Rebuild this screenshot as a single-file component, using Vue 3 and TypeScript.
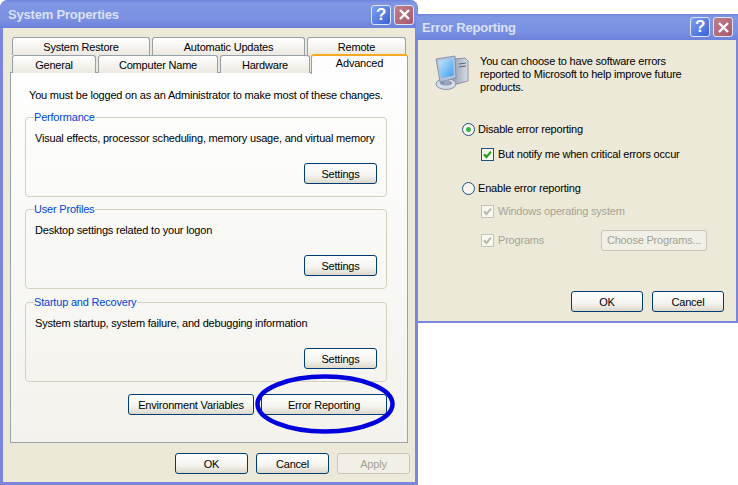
<script setup lang="ts">
const topTabs = [
  { label: 'System Restore', width: 138 },
  { label: 'Automatic Updates', width: 153 },
  { label: 'Remote', width: 99 },
]
const bottomTabs = [
  { label: 'General', width: 84 },
  { label: 'Computer Name', width: 120 },
  { label: 'Hardware', width: 90 },
]
const groups = [
  { title: 'Performance', text: 'Visual effects, processor scheduling, memory usage, and virtual memory' },
  { title: 'User Profiles', text: 'Desktop settings related to your logon' },
  { title: 'Startup and Recovery', text: 'System startup, system failure, and debugging information' },
]
</script>

<template>
  <div class="desk">
    <section class="win sys">
      <header class="title">
        <span class="title-text">System Properties</span>
        <span class="ctl help">?</span>
        <span class="ctl close">
          <svg width="13" height="13" viewBox="0 0 13 13"><path d="M2 2 L11 11 M11 2 L2 11" stroke="#fff" stroke-width="2.4" fill="none" /></svg>
        </span>
      </header>
      <div class="sys-body">
        <div class="tabs">
          <div class="tab-row">
            <div v-for="t in topTabs" :key="t.label" class="tab" :style="{ width: t.width + 'px' }">{{ t.label }}</div>
          </div>
          <div class="tab-row">
            <div v-for="t in bottomTabs" :key="t.label" class="tab" :style="{ width: t.width + 'px' }">{{ t.label }}</div>
            <div class="tab active">Advanced</div>
          </div>
        </div>
        <div class="panel">
          <p class="notice">You must be logged on as an Administrator to make most of these changes.</p>
          <fieldset v-for="g in groups" :key="g.title" class="group">
            <legend>{{ g.title }}</legend>
            <p>{{ g.text }}</p>
            <button class="btn settings">Settings</button>
          </fieldset>
          <div class="panel-actions">
            <button class="btn wide">Environment Variables</button>
            <div class="circled">
              <button class="btn wide">Error Reporting</button>
              <svg class="ring" width="146" height="64" viewBox="0 0 146 64">
                <ellipse cx="72" cy="31" rx="67.5" ry="27.5" fill="none" stroke="#0000dc" stroke-width="4.5" />
              </svg>
            </div>
          </div>
        </div>
        <div class="actions sys-actions">
          <button class="btn">OK</button>
          <button class="btn">Cancel</button>
          <button class="btn off" disabled>Apply</button>
        </div>
      </div>
    </section>

    <section class="win err">
      <header class="title small">
        <span class="title-text">Error Reporting</span>
        <span class="ctl help">?</span>
        <span class="ctl close">
          <svg width="13" height="13" viewBox="0 0 13 13"><path d="M2 2 L11 11 M11 2 L2 11" stroke="#fff" stroke-width="2.4" fill="none" /></svg>
        </span>
      </header>
      <div class="err-body">
        <div class="intro">
          <svg class="pc" width="34" height="36" viewBox="0 0 34 36">
            <defs>
              <linearGradient id="scr" x1="0" y1="0" x2="1" y2="1">
                <stop offset="0" stop-color="#c4e9fb" />
                <stop offset="1" stop-color="#3d9cec" />
              </linearGradient>
              <linearGradient id="twr" x1="0" y1="0" x2="1" y2="0">
                <stop offset="0" stop-color="#98a2b4" />
                <stop offset="1" stop-color="#d8dce4" />
              </linearGradient>
            </defs>
            <path d="M19 4 L30 3 L33 6 L33 26 L22 29 L18 27 Z" fill="url(#twr)" stroke="#7a8296" stroke-width=".8" />
            <path d="M24 9 L31 8 M24 12 L31 11" stroke="#5e6678" stroke-width="1" />
            <ellipse cx="11" cy="29" rx="10" ry="5.5" fill="#d4dae6" stroke="#76839c" stroke-width=".8" />
            <ellipse cx="11" cy="28" rx="6" ry="2.5" fill="#8793ae" />
            <path d="M1 4 L20 1 L21 23 L5 27 Z" fill="#b4c2da" stroke="#7886a4" stroke-width=".8" />
            <path d="M3.5 6 L18 3.5 L18.7 20.5 L6 23.5 Z" fill="url(#scr)" />
            <path d="M9 26 L14 25 L15 29 L9 30 Z" fill="#9aa6be" />
          </svg>
          <p>You can choose to have software errors<br />reported to Microsoft to help improve future<br />products.</p>
        </div>

        <div class="option first">
          <span class="radio"><i></i></span>
          <span>Disable error reporting</span>
        </div>
        <div class="option sub sub-first">
          <span class="check">
            <svg width="11" height="11" viewBox="0 0 11 11"><path d="M2 5.2 L4.4 8 L9 2.6" fill="none" stroke="#21a121" stroke-width="2.2" /></svg>
          </span>
          <span>But notify me when critical errors occur</span>
        </div>

        <div class="option second">
          <span class="radio"></span>
          <span>Enable error reporting</span>
        </div>
        <div class="option sub dim win-os">
          <span class="check dim-check">
            <svg width="11" height="11" viewBox="0 0 11 11"><path d="M2 5.2 L4.4 8 L9 2.6" fill="none" stroke="#bdbcae" stroke-width="2.2" /></svg>
          </span>
          <span>Windows operating system</span>
        </div>
        <div class="option sub dim prog">
          <span class="check dim-check">
            <svg width="11" height="11" viewBox="0 0 11 11"><path d="M2 5.2 L4.4 8 L9 2.6" fill="none" stroke="#bdbcae" stroke-width="2.2" /></svg>
          </span>
          <span>Programs</span>
          <button class="btn off choose" disabled>Choose Programs...</button>
        </div>

        <div class="actions err-actions">
          <button class="btn">OK</button>
          <button class="btn">Cancel</button>
        </div>
      </div>
    </section>
  </div>
</template>

<style scoped>
.desk {
  position: relative;
  width: 738px;
  height: 485px;
  overflow: hidden;
  background: #fff;
  font-family: "Liberation Sans", Arial, sans-serif;
  font-size: 11px;
  letter-spacing: -0.2px;
  color: #000;
}
.win {
  position: absolute;
  box-sizing: border-box;
  display: flex;
  flex-direction: column;
  background: #ece9d8;
  border: solid #7b87de;
  border-width: 0 3px 3px;
}
.sys {
  left: 0;
  top: 0;
  width: 418px;
  height: 485px;
  border-radius: 8px 8px 0 0;
}
.err {
  left: 416px;
  top: 14px;
  width: 322px;
  height: 309px;
  border-width: 0 2px 2px;
}
.title {
  display: flex;
  align-items: center;
  gap: 3px;
  height: 28px;
  flex: none;
  margin: 0 -3px;
  padding: 1px 4px 0 8px;
  box-sizing: border-box;
  background: linear-gradient(180deg, #6f84dc 0, #7f97e4 12%, #7a90e2 70%, #6b80d8 100%);
  border-radius: 8px 8px 0 0;
}
.title.small {
  height: 26px;
  margin: 0 -2px;
  padding: 0 5px 0 6px;
  border-radius: 0;
}
.title-text {
  flex: 1;
  font: bold 13px "Liberation Sans", sans-serif;
  letter-spacing: -0.2px;
  color: #d9e1f7;
}
.ctl {
  display: flex;
  align-items: center;
  justify-content: center;
  box-sizing: border-box;
  width: 20px;
  height: 20px;
  border: 1px solid #dfe5f8;
  border-radius: 3px;
}
.help {
  background: linear-gradient(135deg, #7ea0f0, #3a62d8);
  color: #fff;
  font: bold 17px "Liberation Sans", sans-serif;
}
.close {
  background: linear-gradient(135deg, #c0808c, #a8586c);
}
.sys-body {
  flex: 1;
  display: flex;
  flex-direction: column;
  padding: 9px 7px 0;
}
.tabs {
  position: relative;
  z-index: 1;
  margin-bottom: -1px;
}
.tab-row {
  display: flex;
  height: 18px;
  gap: 2px;
  padding-left: 2px;
}
.tab {
  box-sizing: border-box;
  height: 18px;
  text-align: center;
  line-height: 18px;
  border: 1px solid #96a0a8;
  border-bottom: 0;
  border-radius: 3px 3px 0 0;
  background: linear-gradient(180deg, #fff, #ece9e0);
}
.tab.active {
  width: 97px;
  height: 20px;
  margin: -1px 0 0 -1px;
  line-height: 15px;
  background: #fdfdfd;
  border: 0;
  border-top: 2px solid #f7a823;
  border-left: 1px solid #96a0a8;
  border-right: 1px solid #96a0a8;
}
.panel {
  box-sizing: border-box;
  width: 398px;
  height: 371px;
  padding: 15px 20px 0 15px;
  border: 1px solid #9aa2aa;
  background: linear-gradient(180deg, #fefefe, #f3f2ec);
  display: flex;
  flex-direction: column;
}
.notice {
  margin: 0 0 0 3px;
  line-height: 14px;
  white-space: nowrap;
}
.group {
  box-sizing: border-box;
  width: 362px;
  min-width: 0;
  height: 87px;
  margin: 8px 0 0 -1px;
  padding: 0 9px;
  border: 1px solid #d3d0c0;
  border-radius: 4px;
  display: flex;
  flex-direction: column;
  flex: none;
}
.group + .group {
  margin-top: 5px;
}
.group:last-of-type {
  margin-top: 6px;
}
.group legend {
  padding: 0 1px 0 0;
  margin-left: -1px;
  color: #0046d5;
  line-height: 14px;
}
.group p {
  margin: 7px 0 0;
  line-height: 14px;
  white-space: nowrap;
}
.btn {
  box-sizing: border-box;
  flex: none;
  width: 73px;
  height: 21px;
  padding: 0;
  font: inherit;
  letter-spacing: inherit;
  color: #000;
  border: 1px solid #003c74;
  border-radius: 3px;
  background: linear-gradient(180deg, #fff 0, #f4f3ee 60%, #dcd8cc 100%);
}
.btn.off {
  color: #a1a192;
  border-color: #c9c7ba;
  background: #f2f0e6;
}
.settings {
  margin: 18px 0 0 auto;
}
.panel-actions {
  display: flex;
  gap: 7px;
  margin: 12px 0 0 102px;
}
.wide {
  width: 126px;
}
.circled {
  position: relative;
}
.ring {
  position: absolute;
  left: -8px;
  top: -21px;
  pointer-events: none;
}
.actions {
  display: flex;
}
.sys-actions {
  gap: 8px;
  margin: 10px 0 0 165px;
}
.err-body {
  flex: 1;
  padding: 15px 0 0 17px;
  display: flex;
  flex-direction: column;
}
.intro {
  display: flex;
  gap: 11px;
}
.intro p {
  margin: 0;
  line-height: 13px;
  white-space: nowrap;
}
.pc {
  flex: none;
}
.option {
  display: flex;
  align-items: center;
  gap: 3px;
  height: 14px;
  white-space: nowrap;
}
.first {
  margin: 28px 0 0 27px;
}
.sub {
  margin-left: 46px;
  gap: 4px;
}
.sub-first {
  margin-top: 11px;
}
.second {
  margin: 20px 0 0 27px;
}
.win-os {
  margin-top: 9px;
}
.prog {
  margin-top: 15px;
  width: 226px;
}
.dim {
  color: #a5a495;
}
.radio {
  box-sizing: border-box;
  display: flex;
  align-items: center;
  justify-content: center;
  width: 13px;
  height: 13px;
  border: 1px solid #1c5180;
  border-radius: 50%;
  background: #f6f5ef;
}
.radio i {
  width: 5px;
  height: 5px;
  border-radius: 50%;
  background: #3cb24a;
}
.check {
  box-sizing: border-box;
  display: flex;
  align-items: center;
  justify-content: center;
  width: 13px;
  height: 13px;
  border: 1px solid #1c5180;
  background: #f8f7f0;
}
.dim-check {
  border-color: #c6c4b5;
}
.choose {
  width: 106px;
  margin-left: auto;
}
.err-actions {
  gap: 9px;
  margin: auto 0 9px 136px;
}
.err-actions .btn {
  width: 72px;
}
</style>
